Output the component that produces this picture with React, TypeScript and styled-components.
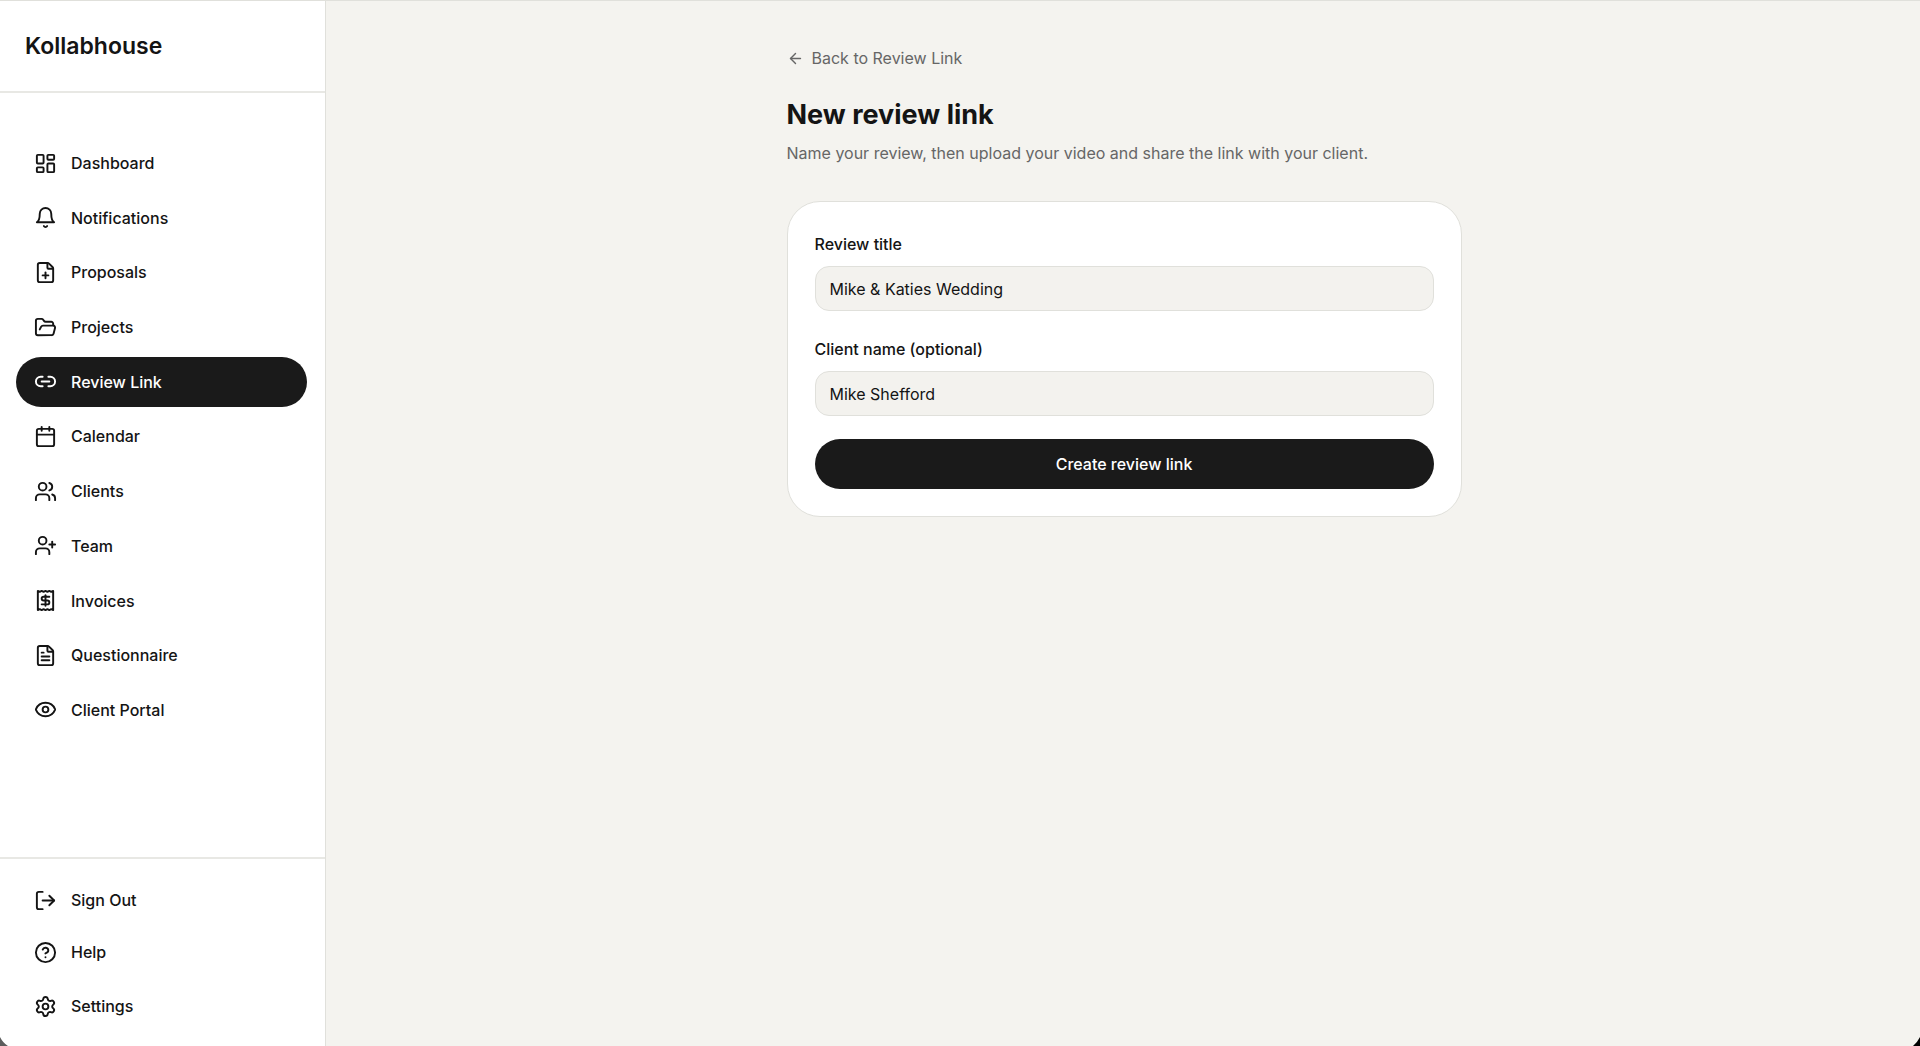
import React from "react";
import styled, { createGlobalStyle, css } from "styled-components";
import {
  ArrowLeft,
  Calendar,
  CircleHelp,
  Eye,
  FilePlus,
  FileText,
  LayoutDashboard,
  UserPlus,
  Users,
  type LucideIcon,
} from "lucide-react";

const color = {
  ink: "#1a1a1a",
  text: "#141414",
  muted: "#666666",
  canvas: "#f4f3ef",
  field: "#f3f2ee",
  line: "#e0e0db",
  surface: "#ffffff",
};

const GlobalStyle = createGlobalStyle`
  *, *::before, *::after { box-sizing: border-box; }
  body {
    margin: 0;
    background: ${color.canvas};
    color: ${color.text};
    font-family: Inter, "Liberation Sans", sans-serif;
    font-size: 16px;
    line-height: 24px;
    -webkit-font-smoothing: antialiased;
  }
  button, input { font: inherit; color: inherit; }
  h1, p { margin: 0; }
`;

const Shell = styled.div`
  display: flex;
  min-height: 100vh;
  border-top: 1px solid ${color.line};
`;

const Sidebar = styled.aside`
  display: flex;
  flex-direction: column;
  flex: none;
  width: 326px;
  background: ${color.surface};
  border-right: 1px solid ${color.line};
`;

const Brand = styled.div`
  padding: 30px 25px;
  border-bottom: 2px solid #e8e8e4;
  font-size: 23px;
  font-weight: 600;
  line-height: 30px;
`;

const PrimaryNav = styled.nav`
  display: flex;
  flex: 1;
  flex-direction: column;
  justify-content: space-between;
  gap: 4px;
  padding: 45px 18px 122px 16px;
`;

const AccountNav = styled.nav`
  display: flex;
  flex-direction: column;
  gap: 4px;
  padding: 18px 18px 15px 16px;
  border-top: 2px solid #e8e8e4;
`;

const itemStyle = css`
  display: flex;
  align-items: center;
  gap: 14px;
  padding: 0 18px;
  border: 0;
  border-radius: 25px;
  font-weight: 500;
  text-align: left;
  text-decoration: none;
  cursor: pointer;

  svg {
    flex: none;
    width: 23px;
    height: 23px;
  }
`;

const NavLink = styled.a<{ $active?: boolean }>`
  ${itemStyle}
  height: 50px;
  background: ${(p) => (p.$active ? color.ink : "transparent")};
  color: ${(p) => (p.$active ? color.surface : color.text)};
`;

const SignOutButton = styled.button`
  ${itemStyle}
  height: 46px;
  background: transparent;
`;

const Main = styled.main`
  flex: 1;
  padding: 45px 46px 45px 48px;
`;

const Column = styled.div`
  max-width: 675px;
  margin: 0 auto;
`;

const BackLink = styled.a`
  display: flex;
  align-items: center;
  gap: 8px;
  width: fit-content;
  color: ${color.muted};
  text-decoration: none;

  svg {
    width: 17px;
    height: 17px;
  }
`;

const Title = styled.h1`
  margin-top: 27px;
  font-size: 27px;
  font-weight: 700;
  line-height: 36px;
`;

const Subtitle = styled.p`
  margin-top: 8px;
  color: ${color.muted};
`;

const Card = styled.form`
  display: flex;
  flex-direction: column;
  gap: 23px;
  margin-top: 36px;
  padding: 27px;
  background: ${color.surface};
  border: 1px solid ${color.line};
  border-radius: 33px;
`;

const Field = styled.div`
  display: flex;
  flex-direction: column;
  gap: 7px;
`;

const Label = styled.label`
  font-weight: 500;
  line-height: 30px;
`;

const TextInput = styled.input`
  width: 100%;
  height: 45px;
  padding: 0 14px;
  background: ${color.field};
  border: 1px solid ${color.line};
  border-radius: 14px;
  outline: none;
`;

const SubmitButton = styled.button`
  height: 50px;
  border: 0;
  border-radius: 25px;
  background: ${color.ink};
  color: ${color.surface};
  font-weight: 500;
  cursor: pointer;
`;

const WindowCorner = styled.svg<{ $side: "left" | "right" }>`
  position: fixed;
  bottom: 0;
  ${(p) => p.$side}: 0;
  width: 9px;
  height: 9px;
  pointer-events: none;
`;

const LineIcon = ({ children }: { children: React.ReactNode }) => (
  <svg
    viewBox="0 0 24 24"
    fill="none"
    stroke="currentColor"
    strokeWidth={2}
    strokeLinecap="round"
    strokeLinejoin="round"
    aria-hidden="true"
  >
    {children}
  </svg>
);

const BellIcon = () => (
  <LineIcon>
    <path d="M6 8a6 6 0 0 1 12 0c0 7 3 9 3 9H3s3-2 3-9" />
    <path d="M10.3 21a1.94 1.94 0 0 0 3.4 0" />
  </LineIcon>
);

const FolderIcon = () => (
  <LineIcon>
    <path d="m6 14 1.5-2.9A2 2 0 0 1 9.24 10H20a2 2 0 0 1 1.94 2.5l-1.54 6a2 2 0 0 1-1.95 1.5H4a2 2 0 0 1-2-2V5a2 2 0 0 1 2-2h3.9a2 2 0 0 1 1.69.9l.81 1.2a2 2 0 0 0 1.67.9H18a2 2 0 0 1 2 2v2" />
  </LineIcon>
);

const LinkIcon = () => (
  <LineIcon>
    <path d="M9 17H7A5 5 0 0 1 7 7h2" />
    <path d="M15 7h2a5 5 0 1 1 0 10h-2" />
    <path d="M8 12h8" />
  </LineIcon>
);

const ReceiptIcon = () => (
  <LineIcon>
    <path d="M4 2v20l2-1 2 1 2-1 2 1 2-1 2 1 2-1 2 1V2l-2 1-2-1-2 1-2-1-2 1-2-1-2 1Z" />
    <path d="M16 8h-6a2 2 0 1 0 0 4h4a2 2 0 1 1 0 4H8" />
    <path d="M12 17.5v-11" />
  </LineIcon>
);

const SignOutIcon = () => (
  <LineIcon>
    <path d="M9 21H5a2 2 0 0 1-2-2V5a2 2 0 0 1 2-2h4" />
    <path d="m16 17 5-5-5-5" />
    <path d="M21 12H9" />
  </LineIcon>
);

const GearIcon = () => (
  <LineIcon>
    <path d="M9.671 4.136a2.34 2.34 0 0 1 4.659 0 2.34 2.34 0 0 0 3.319 1.915 2.34 2.34 0 0 1 2.33 4.033 2.34 2.34 0 0 0 0 3.831 2.34 2.34 0 0 1-2.33 4.033 2.34 2.34 0 0 0-3.319 1.915 2.34 2.34 0 0 1-4.659 0 2.34 2.34 0 0 0-3.32-1.915 2.34 2.34 0 0 1-2.33-4.033 2.34 2.34 0 0 0 0-3.831A2.34 2.34 0 0 1 6.35 6.051a2.34 2.34 0 0 0 3.319-1.915" />
    <circle cx="12" cy="12" r="3" />
  </LineIcon>
);

type NavItem = { label: string; icon: LucideIcon | (() => React.ReactElement); active?: boolean };

const primaryItems: NavItem[] = [
  { label: "Dashboard", icon: LayoutDashboard },
  { label: "Notifications", icon: BellIcon },
  { label: "Proposals", icon: FilePlus },
  { label: "Projects", icon: FolderIcon },
  { label: "Review Link", icon: LinkIcon, active: true },
  { label: "Calendar", icon: Calendar },
  { label: "Clients", icon: Users },
  { label: "Team", icon: UserPlus },
  { label: "Invoices", icon: ReceiptIcon },
  { label: "Questionnaire", icon: FileText },
  { label: "Client Portal", icon: Eye },
];

export default function App() {
  return (
    <>
      <GlobalStyle />
      <Shell>
        <Sidebar>
          <Brand>Kollabhouse</Brand>
          <PrimaryNav aria-label="Main">
            {primaryItems.map(({ label, icon: Icon, active }) => (
              <NavLink key={label} href="#" $active={active} aria-current={active ? "page" : undefined}>
                <Icon />
                {label}
              </NavLink>
            ))}
          </PrimaryNav>
          <AccountNav aria-label="Account">
            <SignOutButton type="button">
              <SignOutIcon />
              Sign Out
            </SignOutButton>
            <NavLink href="#">
              <CircleHelp />
              Help
            </NavLink>
            <NavLink href="#">
              <GearIcon />
              Settings
            </NavLink>
          </AccountNav>
        </Sidebar>
        <Main>
          <Column>
            <BackLink href="#">
              <ArrowLeft />
              Back to Review Link
            </BackLink>
            <Title>New review link</Title>
            <Subtitle>Name your review, then upload your video and share the link with your client.</Subtitle>
            <Card onSubmit={(e) => e.preventDefault()}>
              <Field>
                <Label htmlFor="review-title">Review title</Label>
                <TextInput id="review-title" type="text" defaultValue="Mike &amp; Katies Wedding" />
              </Field>
              <Field>
                <Label htmlFor="client-name">Client name (optional)</Label>
                <TextInput id="client-name" type="text" defaultValue="Mike Shefford" />
              </Field>
              <SubmitButton type="submit">Create review link</SubmitButton>
            </Card>
          </Column>
        </Main>
      </Shell>
      <WindowCorner $side="left" viewBox="0 0 9 9" aria-hidden="true">
        <path d="M0 0Q3 6 8 9H0Z" fill="#5c5c5c" />
      </WindowCorner>
      <WindowCorner $side="right" viewBox="0 0 9 9" aria-hidden="true">
        <path d="M9 0Q6 6 2 9H9Z" fill="#000000" />
      </WindowCorner>
    </>
  );
}
